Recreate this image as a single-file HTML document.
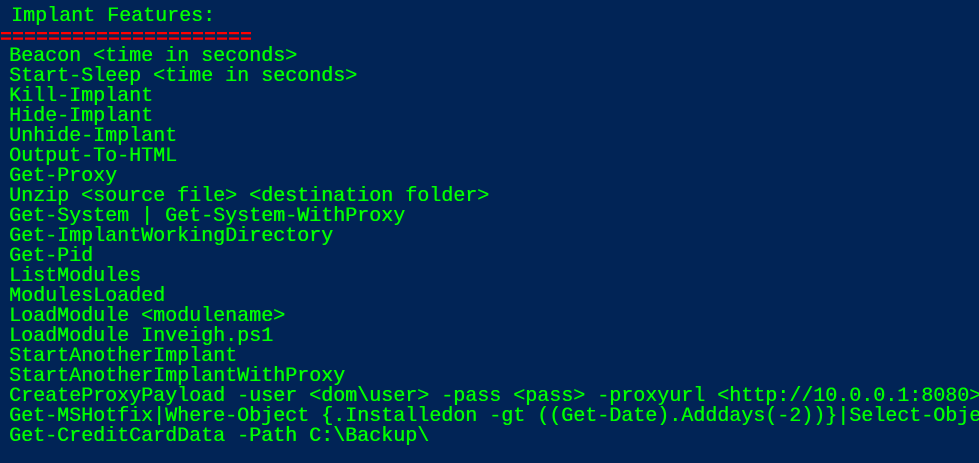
<!DOCTYPE html>
<html><head><meta charset="utf-8"><style>
html,body{margin:0;padding:0;width:979px;height:463px;overflow:hidden;background:#012456;}
pre{margin:0;position:absolute;left:9px;top:7px;font-family:"Liberation Mono",monospace;font-size:20px;line-height:20px;color:#00ff00;white-space:pre;text-shadow:0.4px 0 0 #00ff00;}
.t{margin-left:2px;}
.r{color:#ff0000;margin-left:-9px;display:inline-block;font-weight:bold;text-shadow:none;position:relative;top:2px;}
</style></head><body><pre><span class="t">Implant Features:</span>
<span class="r">=====================</span>
Beacon &lt;time in seconds&gt;
Start-Sleep &lt;time in seconds&gt;
Kill-Implant
Hide-Implant
Unhide-Implant
Output-To-HTML
Get-Proxy
Unzip &lt;source file&gt; &lt;destination folder&gt;
Get-System | Get-System-WithProxy
Get-ImplantWorkingDirectory
Get-Pid
ListModules
ModulesLoaded
LoadModule &lt;modulename&gt;
LoadModule Inveigh.ps1
StartAnotherImplant
StartAnotherImplantWithProxy
CreateProxyPayload -user &lt;dom\user&gt; -pass &lt;pass&gt; -proxyurl &lt;http://10.0.0.1:8080&gt;
Get-MSHotfix|Where-Object {.Installedon -gt ((Get-Date).Adddays(-2))}|Select-Object
Get-CreditCardData -Path C:\Backup\</pre></body></html>
